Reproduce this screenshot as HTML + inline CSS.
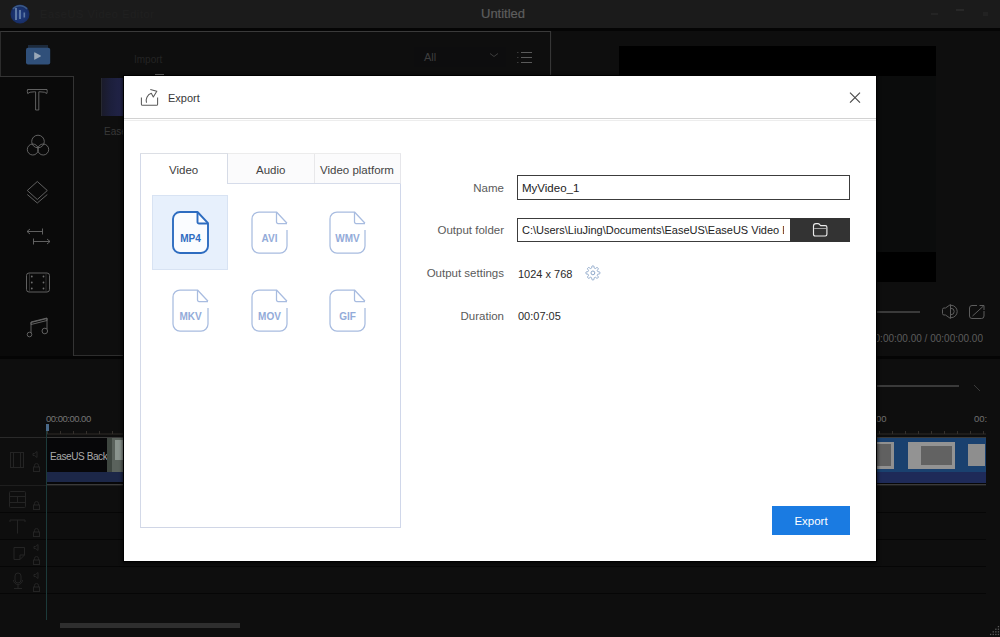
<!DOCTYPE html>
<html><head><meta charset="utf-8">
<style>
*{margin:0;padding:0;box-sizing:border-box}
html,body{width:1000px;height:637px;overflow:hidden;background:#111;font-family:"Liberation Sans",sans-serif}
.a{position:absolute}
.txt{white-space:nowrap;line-height:1}
</style></head><body>
<!-- title bar -->
<div class="a" style="left:0;top:0;width:1000px;height:28px;background:#1b1b1b"></div>
<svg class="a" style="left:9px;top:3px" width="22" height="22" viewBox="0 0 22 22">
 <defs><radialGradient id="lg" cx="50%" cy="55%" r="55%"><stop offset="0" stop-color="#203e84"/><stop offset="1" stop-color="#162a5e"/></radialGradient></defs>
 <circle cx="11" cy="11" r="9.5" fill="url(#lg)"/>
 <path d="M4 6 A9 9 0 0 1 18 6" stroke="#3c5a86" stroke-width="1.5" fill="none"/>
 <rect x="6" y="5" width="2" height="12" fill="#5d78a4"/>
 <rect x="10" y="7" width="2" height="9" fill="#5d78a4"/>
 <rect x="14.5" y="9.5" width="1.6" height="5" fill="#5d78a4"/>
</svg>
<div class="a txt" style="left:40px;top:9px;font-size:11px;color:#202020;letter-spacing:0.6px">EaseUS Video Editor</div>
<div class="a txt" style="left:481px;top:7px;font-size:13px;color:#5e5e5e;-webkit-text-stroke:0.2px #5e5e5e">Untitled</div>
<div class="a" style="left:931px;top:13px;width:7px;height:2px;background:#242424"></div>
<div class="a" style="left:956px;top:9px;width:8px;height:2px;background:#282828"></div>
<div class="a" style="left:983px;top:12px;width:5px;height:4px;background:#222"></div>
<div class="a" style="left:0;top:28px;width:1000px;height:3px;background:#050505"></div>

<!-- media panel -->
<div class="a" style="left:0;top:31px;width:551px;height:325px;background:#0e0e0e;border-top:1px solid #3a3a3a;border-right:1px solid #363636;border-left:1px solid #2c2c2c"></div>
<div class="a" style="left:0;top:76px;width:74px;height:280px;background:#0a0a0a;border-top:1px solid #343434;border-right:1px solid #343434"></div>
<div class="a" style="left:74px;top:355px;width:477px;height:1px;background:#2e2e2e"></div>
<!-- media tab icon -->
<svg class="a" style="left:25px;top:43px" width="26" height="24" viewBox="0 0 26 24">
 <path d="M3 2 H23 V5 H3 Z" fill="#1c2a3c"/>
 <rect x="1" y="4.8" width="24.2" height="16.8" rx="2" fill="#30507a"/>
 <path d="M9.2 9.8 Q9.2 9 10 9.4 L15.6 12.6 Q16.3 13 15.6 13.4 L10 16.6 Q9.2 17 9.2 16.2 Z" fill="#9aa8b8"/>
</svg>
<!-- sidebar icons -->
<svg class="a" style="left:20px;top:82px" width="36" height="260" viewBox="0 0 36 260" fill="none" stroke="#6a6a6a" stroke-width="0.9">
 <!-- T -->
 <path d="M7.5 7.5 H27 Q27.5 9.5 26.8 11.5 Q25.5 9.8 20 9.8 H18.8 V28 H15.6 V9.8 H14.5 Q9 9.8 7.7 11.5 Q7 9.5 7.5 7.5 Z" stroke-width="0.9"/>
 <!-- filter circles -->
 <circle cx="18" cy="59.5" r="6.3"/>
 <circle cx="12.8" cy="67.5" r="5.5"/>
 <circle cx="23.2" cy="67.5" r="5.5"/>
 <!-- overlay diamonds -->
 <path d="M17.3 99.5 L27.3 108.5 L17.3 117.5 L7.3 108.5 Z"/>
 <path d="M7.3 112.5 L17.3 121 L27.3 112.5"/>
 <!-- transition -->
 <path d="M7 149.5 H22.5 M22.5 146.5 V152.5 M7 149.5 L10 147 M7 149.5 L10 152"/>
 <path d="M13.5 159.5 H30 M13.5 156.5 V162.5 M30 159.5 L27 157 M30 159.5 L27 162"/>
 <!-- film -->
 <rect x="6.5" y="191" width="23" height="19" rx="2.5"/>
 <circle cx="11.8" cy="194.5" r="0.9" fill="#6e6e6e" stroke="none"/><circle cx="11.8" cy="200.5" r="0.9" fill="#6e6e6e" stroke="none"/><circle cx="11.8" cy="206.5" r="0.9" fill="#6e6e6e" stroke="none"/>
 <circle cx="23.5" cy="194.5" r="0.9" fill="#6e6e6e" stroke="none"/><circle cx="23.5" cy="200.5" r="0.9" fill="#6e6e6e" stroke="none"/><circle cx="23.5" cy="206.5" r="0.9" fill="#6e6e6e" stroke="none"/>
 <path d="M9.5 191 V210 M26 191 V210" stroke="#3a3a3a" stroke-width="0.7"/>
 <!-- music -->
 <path d="M11 251 V240 L27 236 V247"/>
 <path d="M11 240.5 L27 236.5 V238.5 L11 242.5 Z" />
 <circle cx="9.5" cy="252.5" r="2.3"/>
 <circle cx="24.8" cy="249" r="2.8"/>
</svg>
<!-- content header -->
<div class="a txt" style="left:134px;top:55px;font-size:10px;color:#242424">Import</div>
<div class="a" style="left:414px;top:47px;width:92px;height:20px;background:#0d0d0e"></div>
<div class="a txt" style="left:424px;top:52px;font-size:11px;color:#3e3e3e">All</div>
<svg class="a" style="left:489px;top:52px" width="10" height="6" viewBox="0 0 10 6"><path d="M1 1.5 L5 4.5 L9 1.5" fill="none" stroke="#3c3c3c" stroke-width="1"/></svg>
<svg class="a" style="left:516px;top:51px" width="17" height="14" viewBox="0 0 17 14" fill="none" stroke="#5a5a5a" stroke-width="1">
 <path d="M5 1.5 H16 M5 6.5 H16 M5 11.5 H16"/><path d="M1 1.5 H2.5 M1 6.5 H2.5 M1 11.5 H2.5" stroke="#3a3a3a"/>
</svg>
<!-- thumbnail -->
<div class="a" style="left:101px;top:78px;width:23px;height:38px;background:linear-gradient(90deg,#1a1b2a 0%,#1c1f3c 40%,#22244a 100%);border-left:1px solid #262830"></div>
<div class="a txt" style="left:104px;top:127px;font-size:10px;color:#383838">EaseUS Background</div>

<div class="a" style="left:155px;top:74px;width:9px;height:2px;background:#6a6a6a"></div>
<!-- preview panel -->
<div class="a" style="left:552px;top:31px;width:448px;height:325px;background:#0e0e0e"></div>
<div class="a" style="left:619px;top:46px;width:317px;height:236px;background:#000"></div>
<div class="a" style="left:619px;top:76px;width:317px;height:176px;background:#0b0c0c"></div>
<div class="a" style="left:868px;top:311px;width:52px;height:1.5px;background:#3a3a3a"></div>
<svg class="a" style="left:941px;top:303px" width="20" height="17" viewBox="0 0 20 17" fill="none" stroke="#5c5c5c" stroke-width="1">
 <path d="M1.5 6.5 Q1.5 5 3 5 H4.5 L9.5 1.5 V15.5 L4.5 12 H3 Q1.5 12 1.5 10.5 Z"/>
 <path d="M10 5.3 A3.2 3.2 0 0 1 10 11.7"/><path d="M10 2.3 A6.2 6.2 0 0 1 10 14.7"/>
</svg>
<svg class="a" style="left:968px;top:304px" width="18" height="16" viewBox="0 0 18 16" fill="none" stroke="#5c5c5c" stroke-width="1">
 <path d="M9 1.5 H4 Q1.5 1.5 1.5 4 V12 Q1.5 14.5 4 14.5 H13.5 Q16 14.5 16 12 V7"/>
 <path d="M4.5 12 L15.5 2 M11.5 1.5 H16 V6"/>
</svg>
<div class="a txt" style="left:860px;top:334px;width:123px;text-align:right;font-size:10px;color:#5c5c5c;overflow:hidden">00:00:00.00 / 00:00:00.00</div>

<!-- separator -->
<div class="a" style="left:0;top:356px;width:1000px;height:3px;background:#050505"></div>

<!-- timeline -->
<div class="a" style="left:0;top:359px;width:1000px;height:278px;background:#0e0e0e"></div>
<div class="a" style="left:860px;top:385px;width:99px;height:2px;background:#3a3a3a"></div>
<svg class="a" style="left:972px;top:384px" width="10" height="10" viewBox="0 0 10 10"><path d="M2 1 L8 7" stroke="#3a3a3a" stroke-width="1"/></svg>
<div class="a txt" style="left:46px;top:414px;font-size:9.5px;letter-spacing:-0.5px;color:#747474">00:00:00.00</div>
<div class="a txt" style="left:876px;top:414px;font-size:9.5px;color:#6e6e6e">00</div>
<div class="a txt" style="left:974px;top:414px;font-size:9.5px;color:#6e6e6e">00:</div>
<div class="a" style="left:46px;top:424px;width:3px;height:7px;background:#4a6a8a"></div>
<!-- ruler ticks -->
<div class="a" style="left:46px;top:433px;width:940px;height:2px;background:#1e1c1a"></div>
<div class="a" style="left:47px;top:431px;width:939px;height:3px;background:repeating-linear-gradient(90deg,#34302c 0 1px,transparent 1px 13px)"></div>
<div class="a" style="left:0;top:437px;width:986px;height:1px;background:#2a2a2a"></div>
<!-- clip -->
<div class="a" style="left:46px;top:437px;width:940px;height:48px;background:#070709;border-top:1px solid #3a3a3a;border-bottom:1px solid #3a3a3a"></div>
<div class="a" style="left:47px;top:472px;width:939px;height:10px;background:#1c2748"></div>
<div class="a txt" style="left:50px;top:452px;font-size:10px;letter-spacing:-0.4px;color:#ababab">EaseUS Back</div>
<div class="a" style="left:107px;top:438px;width:17px;height:34px;background:#5a625c"></div>
<div class="a" style="left:107px;top:438px;width:5px;height:34px;background:#3e4640"></div>
<div class="a" style="left:115px;top:440px;width:9px;height:20px;background:#8a948e"></div>
<!-- clip thumbnails right -->
<div class="a" style="left:876px;top:438px;width:110px;height:34px;background:#1a416f"></div>
<div class="a" style="left:876px;top:472px;width:110px;height:11px;background:#1e2a58"></div>
<div class="a" style="left:876px;top:442px;width:18px;height:27px;background:#909090"></div>
<div class="a" style="left:876px;top:444px;width:15px;height:22px;background:#606060"></div>
<div class="a" style="left:908px;top:442px;width:47px;height:27px;background:#939393"></div>
<div class="a" style="left:921px;top:446px;width:31px;height:19px;background:#626262"></div>
<div class="a" style="left:968px;top:444px;width:17px;height:22px;background:#8e8e8e"></div>
<!-- tracks -->
<div class="a" style="left:0;top:485px;width:986px;height:1px;background:#1e1e1e"></div>
<div class="a" style="left:0;top:512px;width:986px;height:1px;background:#060606"></div>
<div class="a" style="left:0;top:539px;width:986px;height:1px;background:#060606"></div>
<div class="a" style="left:0;top:566px;width:986px;height:1px;background:#060606"></div>
<div class="a" style="left:0;top:593px;width:986px;height:1px;background:#060606"></div>
<div class="a" style="left:46px;top:431px;width:1px;height:189px;background:#1c3a3a"></div>
<!-- track header icons -->
<svg class="a" style="left:0;top:437px" width="46" height="160" viewBox="0 437 46 160" fill="none" stroke="#242424" stroke-width="1">
<rect x="10.5" y="452.5" width="13" height="15"/><path d="M13.5 452.5 V467.5 M20.5 452.5 V467.5"/><path d="M33 453.5 H34.5 L37 451.5 V457.5 L34.5 455.5 H33 Z"/><path d="M34.5 467 V465.5 A2 2 0 0 1 38.5 465.5 V467"/><rect x="33.5" y="467" width="6" height="4.5"/>
<rect x="9.5" y="491.5" width="16" height="16" rx="1"/><path d="M9.5 496.5 H25.5 M9.5 502.5 H25.5 M17.5 496.5 V502.5"/><path d="M34.5 505 V503.5 A2 2 0 0 1 38.5 503.5 V505"/><rect x="33.5" y="505" width="6" height="4.5"/>
<path d="M10 520 H25 M17.5 520 V533.5 M10 520 V522 M25 520 V522"/><path d="M34.5 532 V530.5 A2 2 0 0 1 38.5 530.5 V532"/><rect x="33.5" y="532" width="6" height="4.5"/>
<path d="M14 547.5 H24.5 V555 L20 559.5 H14 Z M20 559.5 V555 H24.5"/><path d="M34 546.5 H35.5 L38 544.5 V550.5 L35.5 548.5 H34 Z"/><path d="M34.5 560 V558.5 A2 2 0 0 1 38.5 558.5 V560"/><rect x="33.5" y="560" width="6" height="4.5"/>
<rect x="15" y="573" width="6" height="10" rx="3"/><path d="M13.5 580 A4.5 4.5 0 0 0 22.5 580 M18 584.5 V588 M14 588.5 H22"/><path d="M34 574.5 H35.5 L38 572.5 V578.5 L35.5 576.5 H34 Z"/><path d="M34.5 587 V585.5 A2 2 0 0 1 38.5 585.5 V587"/><rect x="33.5" y="587" width="6" height="4.5"/>
</svg>
<!-- scrollbar -->
<div class="a" style="left:60px;top:623px;width:180px;height:5px;background:#2e2e2e"></div>
<svg class="a" style="left:989.5px;top:626px" width="11" height="11" viewBox="0 0 11 11" fill="#5a5a5a"><rect x="7.8" y="0.0" width="1.3" height="1.3"/><rect x="5.2" y="2.6" width="1.3" height="1.3"/><rect x="7.8" y="2.6" width="1.3" height="1.3"/><rect x="2.6" y="5.2" width="1.3" height="1.3"/><rect x="5.2" y="5.2" width="1.3" height="1.3"/><rect x="7.8" y="5.2" width="1.3" height="1.3"/><rect x="0.0" y="7.8" width="1.3" height="1.3"/><rect x="2.6" y="7.8" width="1.3" height="1.3"/><rect x="5.2" y="7.8" width="1.3" height="1.3"/><rect x="7.8" y="7.8" width="1.3" height="1.3"/></svg>

<div class="a" id="dialog" style="left:124px;top:76px;width:752px;height:485px;background:#fff;box-shadow:0 0 0 1px #000,0 1px 3px 2px rgba(0,0,0,.55)">

 <svg class="a" style="left:15px;top:12px" width="22" height="20" viewBox="0 0 22 20">
  <path d="M2.4 9.6 V16.2 Q2.4 17.3 3.5 17.3 H17.5 Q18.6 17.3 18.6 16.2 V9.6" fill="none" stroke="#5a5a5a" stroke-width="1.05"/>
  <path d="M7.5 14.7 C6.3 11.5 8.3 6.6 12.3 5.3 L14.3 9 L17.8 3.3 L11.3 1.4" fill="none" stroke="#5a5a5a" stroke-width="1.05" stroke-linejoin="round"/>
 </svg>
 <div class="a txt" style="left:44px;top:17px;font-size:11px;color:#383838">Export</div>
 <svg class="a" style="left:725px;top:16px" width="12" height="12" viewBox="0 0 12 12">
  <path d="M1 0.6 L11 10.6 M11 0.6 L1 10.6" stroke="#4a4a4a" stroke-width="1.15"/>
 </svg>
 <div class="a" style="left:0;top:42px;width:752px;height:1px;background:#d2d2d2"></div>
 <div class="a" style="left:0;top:44px;width:752px;height:1px;background:#ededed"></div>

 <div class="a" style="left:16px;top:77px;width:261px;height:375px;border-left:1px solid #d3d9e8;border-right:1px solid #d0d7ea;border-bottom:1px solid #d0d6e6"></div>
 <div class="a" style="left:103px;top:77px;width:174px;height:31px;background:#fbfbfc;border-top:1px solid #ececec;border-bottom:1px solid #d6dcea;border-left:1px solid #d6dbe6;border-right:1px solid #e6e6ea"></div>
 <div class="a" style="left:190px;top:78px;width:1px;height:29px;background:#e8e8ea"></div>
 <div class="a" style="left:16px;top:77px;width:88px;height:1px;background:#dcdfe5"></div>
 <div class="a txt" style="left:45px;top:89px;font-size:11.5px;color:#404040">Video</div>
 <div class="a txt" style="left:132px;top:89px;font-size:11.5px;color:#444">Audio</div>
 <div class="a txt" style="left:196px;top:89px;font-size:11.5px;color:#444">Video platform</div>
 <div class="a" style="left:28px;top:119px;width:76px;height:75px;background:#e7f0fc;border:1px solid #d8e3f3"></div>
<svg class="a" style="left:48px;top:135px" width="38" height="44" viewBox="0 0 38 44">
  <path d="M8 1 H25.5 L36 12.2 V35 A7 7 0 0 1 29 42 H8 A7 7 0 0 1 1 35 V8 A7 7 0 0 1 8 1 Z" fill="#fafcff" stroke="#2d6cc0" stroke-width="1.9" stroke-linejoin="round"/>
  <path d="M25.5 1 V11 A1.5 1.5 0 0 0 27 12.5 H36" fill="none" stroke="#2d6cc0" stroke-width="1.9" stroke-linejoin="round"/>
  <text x="18.5" y="30.5" text-anchor="middle" font-family="Liberation Sans" font-weight="bold" font-size="10" fill="#2f6dc2">MP4</text>
 </svg>
<svg class="a" style="left:127px;top:135px" width="38" height="44" viewBox="0 0 38 44">
  <path d="M36 19 V35 A7 7 0 0 1 29 42 H8 A7 7 0 0 1 1 35 V8 A7 7 0 0 1 8 1 H25.5 L36 12.2" fill="none" stroke="#a8bce0" stroke-width="1.25" stroke-linejoin="round"/>
  <path d="M25.5 1 V11 A1.5 1.5 0 0 0 27 12.5 H36" fill="none" stroke="#a8bce0" stroke-width="1.25" stroke-linejoin="round"/>
  <text x="18.5" y="30.5" text-anchor="middle" font-family="Liberation Sans" font-weight="bold" font-size="10" fill="#93abd9">AVI</text>
 </svg>
<svg class="a" style="left:205px;top:135px" width="38" height="44" viewBox="0 0 38 44">
  <path d="M36 19 V35 A7 7 0 0 1 29 42 H8 A7 7 0 0 1 1 35 V8 A7 7 0 0 1 8 1 H25.5 L36 12.2" fill="none" stroke="#a8bce0" stroke-width="1.25" stroke-linejoin="round"/>
  <path d="M25.5 1 V11 A1.5 1.5 0 0 0 27 12.5 H36" fill="none" stroke="#a8bce0" stroke-width="1.25" stroke-linejoin="round"/>
  <text x="18.5" y="30.5" text-anchor="middle" font-family="Liberation Sans" font-weight="bold" font-size="10" fill="#93abd9">WMV</text>
 </svg>
<svg class="a" style="left:48px;top:213px" width="38" height="44" viewBox="0 0 38 44">
  <path d="M36 19 V35 A7 7 0 0 1 29 42 H8 A7 7 0 0 1 1 35 V8 A7 7 0 0 1 8 1 H25.5 L36 12.2" fill="none" stroke="#a8bce0" stroke-width="1.25" stroke-linejoin="round"/>
  <path d="M25.5 1 V11 A1.5 1.5 0 0 0 27 12.5 H36" fill="none" stroke="#a8bce0" stroke-width="1.25" stroke-linejoin="round"/>
  <text x="18.5" y="30.5" text-anchor="middle" font-family="Liberation Sans" font-weight="bold" font-size="10" fill="#93abd9">MKV</text>
 </svg>
<svg class="a" style="left:127px;top:213px" width="38" height="44" viewBox="0 0 38 44">
  <path d="M36 19 V35 A7 7 0 0 1 29 42 H8 A7 7 0 0 1 1 35 V8 A7 7 0 0 1 8 1 H25.5 L36 12.2" fill="none" stroke="#a8bce0" stroke-width="1.25" stroke-linejoin="round"/>
  <path d="M25.5 1 V11 A1.5 1.5 0 0 0 27 12.5 H36" fill="none" stroke="#a8bce0" stroke-width="1.25" stroke-linejoin="round"/>
  <text x="18.5" y="30.5" text-anchor="middle" font-family="Liberation Sans" font-weight="bold" font-size="10" fill="#93abd9">MOV</text>
 </svg>
<svg class="a" style="left:205px;top:213px" width="38" height="44" viewBox="0 0 38 44">
  <path d="M36 19 V35 A7 7 0 0 1 29 42 H8 A7 7 0 0 1 1 35 V8 A7 7 0 0 1 8 1 H25.5 L36 12.2" fill="none" stroke="#a8bce0" stroke-width="1.25" stroke-linejoin="round"/>
  <path d="M25.5 1 V11 A1.5 1.5 0 0 0 27 12.5 H36" fill="none" stroke="#a8bce0" stroke-width="1.25" stroke-linejoin="round"/>
  <text x="18.5" y="30.5" text-anchor="middle" font-family="Liberation Sans" font-weight="bold" font-size="10" fill="#93abd9">GIF</text>
 </svg>

 <div class="a txt" style="left:320px;top:107px;width:60px;text-align:right;font-size:11.5px;color:#5a5a5a">Name</div>
 <div class="a txt" style="left:280px;top:149px;width:100px;text-align:right;font-size:11.5px;color:#5a5a5a">Output folder</div>
 <div class="a txt" style="left:280px;top:192px;width:100px;text-align:right;font-size:11.5px;color:#5a5a5a">Output settings</div>
 <div class="a txt" style="left:280px;top:235px;width:100px;text-align:right;font-size:11.5px;color:#5a5a5a">Duration</div>
 <div class="a" style="left:393px;top:99px;width:333px;height:25px;border:1px solid #3c3c3c;background:#fff"></div>
 <div class="a txt" style="left:398px;top:107px;font-size:11.5px;color:#222">MyVideo_1</div>
 <div class="a" style="left:393px;top:142px;width:333px;height:24px;border:1px solid #3c3c3c;background:#fff;overflow:hidden"></div>
 <div class="a txt" style="left:398px;top:149px;width:262px;overflow:hidden;font-size:11px;color:#222">C:\Users\LiuJing\Documents\EaseUS\EaseUS Video Editor</div>
 <div class="a" style="left:666px;top:142px;width:60px;height:24px;background:#333"></div>
 <svg class="a" style="left:688px;top:146px" width="16" height="15" viewBox="0 0 16 15">
  <path d="M1.5 12.3 V4 Q1.5 1.6 4 1.6 H5.8 Q7 1.6 8 2.8 L8.7 3.6 H13.3 Q14.9 3.6 14.9 5.2 V12.3 Q14.9 14 13.3 14 H3.1 Q1.5 14 1.5 12.3 Z" fill="none" stroke="#ececec" stroke-width="1.15"/><path d="M2.2 6.5 H14.2" stroke="#bdbdbd" stroke-width="0.8"/>
 </svg>
 <div class="a txt" style="left:394px;top:193px;font-size:11px;color:#2a2a2a">1024 x 768</div>
 <svg class="a" style="left:460px;top:188px" width="17" height="17" viewBox="0 0 17 17">
  <path d="M15.90 8.90 L15.89 9.12 L15.87 9.34 L15.81 9.55 L15.69 9.76 L15.41 9.93 L14.89 10.04 L14.30 10.11 L13.90 10.18 L13.70 10.29 L13.59 10.42 L13.52 10.56 L13.46 10.70 L13.40 10.85 L13.34 10.99 L13.30 11.14 L13.28 11.31 L13.34 11.53 L13.57 11.86 L13.94 12.33 L14.23 12.77 L14.30 13.09 L14.25 13.33 L14.14 13.52 L14.00 13.69 L13.85 13.85 L13.69 14.00 L13.52 14.14 L13.33 14.25 L13.09 14.30 L12.77 14.23 L12.33 13.94 L11.86 13.57 L11.53 13.34 L11.31 13.28 L11.14 13.30 L10.99 13.34 L10.85 13.40 L10.70 13.46 L10.56 13.52 L10.42 13.59 L10.29 13.70 L10.18 13.90 L10.11 14.30 L10.04 14.89 L9.93 15.41 L9.76 15.69 L9.55 15.81 L9.34 15.87 L9.12 15.89 L8.90 15.90 L8.68 15.89 L8.46 15.87 L8.25 15.81 L8.04 15.69 L7.87 15.41 L7.76 14.89 L7.69 14.30 L7.62 13.90 L7.51 13.70 L7.38 13.59 L7.24 13.52 L7.10 13.46 L6.95 13.40 L6.81 13.34 L6.66 13.30 L6.49 13.28 L6.27 13.34 L5.94 13.57 L5.47 13.94 L5.03 14.23 L4.71 14.30 L4.47 14.25 L4.28 14.14 L4.11 14.00 L3.95 13.85 L3.80 13.69 L3.66 13.52 L3.55 13.33 L3.50 13.09 L3.57 12.77 L3.86 12.33 L4.23 11.86 L4.46 11.53 L4.52 11.31 L4.50 11.14 L4.46 10.99 L4.40 10.85 L4.34 10.70 L4.28 10.56 L4.21 10.42 L4.10 10.29 L3.90 10.18 L3.50 10.11 L2.91 10.04 L2.39 9.93 L2.11 9.76 L1.99 9.55 L1.93 9.34 L1.91 9.12 L1.90 8.90 L1.91 8.68 L1.93 8.46 L1.99 8.25 L2.11 8.04 L2.39 7.87 L2.91 7.76 L3.50 7.69 L3.90 7.62 L4.10 7.51 L4.21 7.38 L4.28 7.24 L4.34 7.10 L4.40 6.95 L4.46 6.81 L4.50 6.66 L4.52 6.49 L4.46 6.27 L4.23 5.94 L3.86 5.47 L3.57 5.03 L3.50 4.71 L3.55 4.47 L3.66 4.28 L3.80 4.11 L3.95 3.95 L4.11 3.80 L4.28 3.66 L4.47 3.55 L4.71 3.50 L5.03 3.57 L5.47 3.86 L5.94 4.23 L6.27 4.46 L6.49 4.52 L6.66 4.50 L6.81 4.46 L6.95 4.40 L7.10 4.34 L7.24 4.28 L7.38 4.21 L7.51 4.10 L7.62 3.90 L7.69 3.50 L7.76 2.91 L7.87 2.39 L8.04 2.11 L8.25 1.99 L8.46 1.93 L8.68 1.91 L8.90 1.90 L9.12 1.91 L9.34 1.93 L9.55 1.99 L9.76 2.11 L9.93 2.39 L10.04 2.91 L10.11 3.50 L10.18 3.90 L10.29 4.10 L10.42 4.21 L10.56 4.28 L10.70 4.34 L10.85 4.40 L10.99 4.46 L11.14 4.50 L11.31 4.52 L11.53 4.46 L11.86 4.23 L12.33 3.86 L12.77 3.57 L13.09 3.50 L13.33 3.55 L13.52 3.66 L13.69 3.80 L13.85 3.95 L14.00 4.11 L14.14 4.28 L14.25 4.47 L14.30 4.71 L14.23 5.03 L13.94 5.47 L13.57 5.94 L13.34 6.27 L13.28 6.49 L13.30 6.66 L13.34 6.81 L13.40 6.95 L13.46 7.10 L13.52 7.24 L13.59 7.38 L13.70 7.51 L13.90 7.62 L14.30 7.69 L14.89 7.76 L15.41 7.87 L15.69 8.04 L15.81 8.25 L15.87 8.46 L15.89 8.68 Z" fill="none" stroke="#7f9cc2" stroke-width="0.9" stroke-linejoin="round"/>
  <circle cx="8.9" cy="8.9" r="1.9" fill="none" stroke="#7f9cc2" stroke-width="0.9"/>
 </svg>
 <div class="a txt" style="left:394px;top:235px;font-size:11px;color:#2a2a2a">00:07:05</div>
 <div class="a" style="left:648px;top:430px;width:78px;height:29px;background:#1a7be2"></div>
 <div class="a txt" style="left:648px;top:440px;width:78px;text-align:center;font-size:11.5px;color:#fff">Export</div>
</div>
</body></html>
